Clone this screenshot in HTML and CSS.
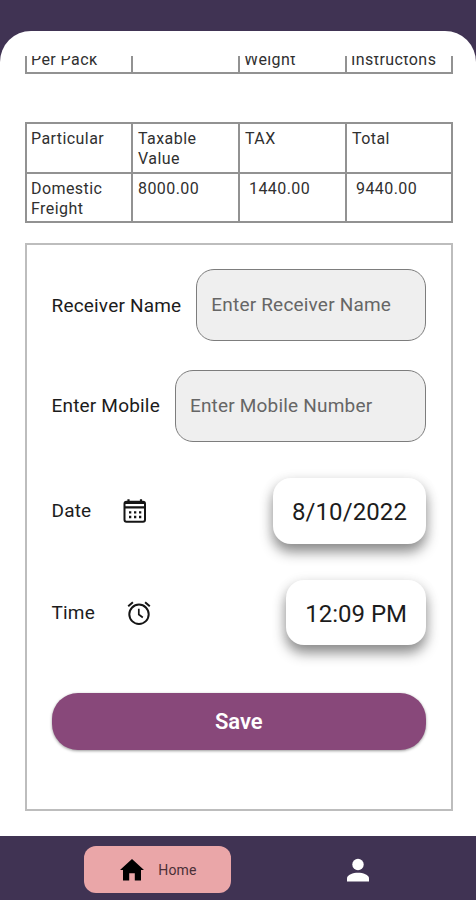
FILE: index.html
```html
<!DOCTYPE html>
<html lang="en">
<head>
<meta charset="utf-8">
<meta name="viewport" content="width=device-width">
<title>Delivery receipt</title>
<link rel="stylesheet" href="styles.css">
</head>
<body>
<div class="app">
  <main class="sheet">
    <div class="scroll">
      <div class="table table-cut">
        <div class="cell">Per Pack</div><div class="cell"></div><div class="cell">Weight</div><div class="cell">Instructons</div>
      </div>
      <div class="table">
        <div class="cell">Particular</div><div class="cell">Taxable Value</div><div class="cell">TAX</div><div class="cell">Total</div>
        <div class="cell">Domestic Freight</div><div class="cell">8000.00</div><div class="cell amount">1440.00</div><div class="cell amount">9440.00</div>
      </div>
      <form class="form">
        <label class="row row-name"><span class="label">Receiver Name</span><input class="field" type="text" placeholder="Enter Receiver Name"></label>
        <label class="row"><span class="label">Enter Mobile</span><input class="field" type="text" placeholder="Enter Mobile Number"></label>
        <div class="row row-date">
          <span class="label">Date</span>
          <svg class="icon" viewBox="0 0 24 24" fill="none" stroke="#151515" stroke-width="2"><rect x="1.5" y="2.8" width="20.5" height="20" rx="2"/><path d="M2 4h19.500M2 8.400h19.500" stroke-width="2.200"/><path d="M5.500 .3v3M18 .3v3" stroke-width="2.200"/><path d="M6 13.400h12.500M6 18h12.500" stroke-width="2.300" stroke-dasharray="2.300 2.700"/></svg>
          <button class="value" type="button">8/10/2022</button>
        </div>
        <div class="row row-time">
          <span class="label">Time</span>
          <svg class="icon" viewBox="0 0 24 24" fill="none" stroke="#151515" stroke-width="2"><circle cx="12" cy="13.300" r="9.700"/><path d="M11.800 7.800v5.700l4 3" stroke-width="1.700"/><path d="M1.200 5.300l4.700-4M18.100 1.300l4.700 4"/></svg>
          <button class="value value-time" type="button">12:09 PM</button>
        </div>
        <button class="save" type="button">Save</button>
      </form>
    </div>
  </main>
  <nav class="nav">
    <a class="tab tab-active"><svg class="nav-icon" viewBox="0 0 24 24"><path fill="#000" d="M12 1L24 12h-3v10.500h-6.200v-7.200H9.200v7.200H3V12H0z"/></svg><span>Home</span></a>
    <a class="tab"><svg class="nav-icon" viewBox="0 0 24 24"><circle cx="12" cy="6.500" r="5.700" fill="#fff"/><path fill="#fff" d="M1 23.500v-3.200c0-3.600 6.200-5.600 11-5.600s11 2 11 5.600v3.200z"/></svg></a>
  </nav>
</div>
</body>
</html>
```
FILE: styles.css
```css
* { box-sizing: border-box; }
body { margin: 0; font-family: Roboto, "Liberation Sans", sans-serif; color: #1c1c1c; }
button, input { font-family: inherit; }
.app { width: 476px; height: 900px; display: flex; flex-direction: column; padding-top: 31px; background: #403353; overflow: hidden; }
.sheet { height: 805px; flex: none; background: #fff; border-radius: 31px 31px 0 0; padding: 25px 23px 0 25px; }
.scroll { height: 780px; overflow: hidden; display: flex; flex-direction: column; }
.table { flex: none; display: grid; grid-template-columns: 106px 107px 107px 106px; grid-template-rows: 50px 49px; border: solid #929292; border-width: 2px 0 0 2px; width: 428px; margin-bottom: 20px; font-size: 16px; line-height: 19.5px; letter-spacing: .43px; }
.cell { border: solid #929292; border-width: 0 2px 2px 0; padding: 5px 10px 0 4px; color: #303030; }
.cell:nth-child(4n+2), .cell:nth-child(4n+3), .cell:nth-child(4n) { padding-left: 5px; }
.cell.amount { padding-left: 9px; }
.table-cut { grid-template-rows: 18px; margin-bottom: 48px; border-top: 0; }
.table-cut .cell { display: flex; align-items: flex-end; padding: 0 0 3px 4px; white-space: nowrap; }
.form { flex: none; height: 568px; width: 428px; border: 2px solid #bdbdbd; padding: 24px 25px 0 24.5px; display: flex; flex-direction: column; }
.row { display: flex; align-items: center; height: 72px; margin-bottom: 29px; }
.row-name { margin-bottom: 28.500px; }
.label { font-size: 19px; letter-spacing: .19px; white-space: nowrap; }
.field { flex: 1; min-width: 0; margin-left: 15px; height: 72px; border: 1px solid #7d7d7d; border-radius: 18px; background: #efefef; padding: 0 14px 1px; font-size: 19px; letter-spacing: .19px; outline: none; }
.field::placeholder { color: #666; opacity: 1; }
.row-date { height: 66px; margin: 7px 0 36.500px; }
.row-time { height: 65px; margin-bottom: 48px; }
.icon { width: 24px; height: 24px; margin-left: 32px; }
.value { margin-left: auto; height: 100%; border: 0; border-radius: 18px; background: #fff; padding: 2px 19px 0; font-size: 24px; letter-spacing: .1px; color: #1c1c1c; box-shadow: 0 8px 13px rgba(0,0,0,.43), 0 2px 14px rgba(0,0,0,.08); }
.value-time { letter-spacing: 0; }
.save { height: 57px; flex: none; border: 0; border-radius: 26px; background: #88487a; color: #fff; font-size: 22px; font-weight: 600; letter-spacing: -.1px; box-shadow: 0 1px 3px rgba(0,0,0,.4); }
.nav { height: 64px; flex: none; display: flex; padding: 10px 45px 0 84px; gap: 53px; }
.tab { width: 147px; height: 47px; display: flex; align-items: center; justify-content: center; color: #4b2f37; font-size: 14px; letter-spacing: .2px; gap: 14px; }
.tab-active { background: #eaa6a8; border-radius: 12px; }
.tab-active .nav-icon { margin-left: 2px; }
.nav-icon { width: 24px; height: 24px; }
```
